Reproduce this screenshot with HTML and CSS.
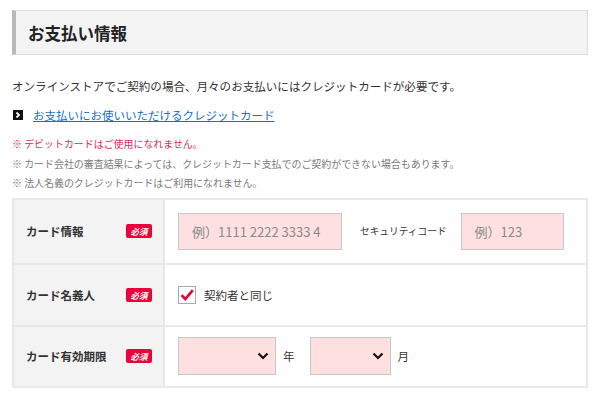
FILE: index.html
```html
<!DOCTYPE html>
<html lang="ja">
<head>
<meta charset="utf-8">
<link rel="stylesheet" href="styles.css">
</head>
<body>
<div class="page">
  <h2 class="heading">お支払い情報</h2>
  <p class="lead">オンラインストアでご契約の場合、月々のお支払いにはクレジットカードが必要です。</p>
  <p class="linkline"><span class="arrow"><svg width="10" height="10" viewBox="0 0 10 10"><path d="M3.5 2.5 L6 5 L3.5 7.5" fill="none" stroke="#fff" stroke-width="1.8"/></svg></span><a href="#" class="link">お支払いにお使いいただけるクレジットカード</a></p>
  <ul class="notes">
    <li class="note red">※ デビットカードはご使用になれません。</li>
    <li class="note">※ カード会社の審査結果によっては、クレジットカード支払でのご契約ができない場合もあります。</li>
    <li class="note">※ 法人名義のクレジットカードはご利用になれません。</li>
  </ul>
  <div class="form">
    <div class="row row1">
      <div class="label"><span class="ltext">カード情報</span><span class="badge">必須</span></div>
      <div class="field">
        <div class="input card"><span class="ph">例）1111 2222 3333 4</span></div>
        <span class="sec">セキュリティコード</span>
        <div class="input code"><span class="ph">例）123</span></div>
      </div>
    </div>
    <div class="row row2">
      <div class="label"><span class="ltext">カード名義人</span><span class="badge">必須</span></div>
      <div class="field">
        <span class="check"><svg width="16" height="16" viewBox="0 0 16 16"><path d="M2.5 8.2 L6.3 12 L13.8 3.2" fill="none" stroke="#e60033" stroke-width="2.6"/></svg></span>
        <span class="ctext">契約者と同じ</span>
      </div>
    </div>
    <div class="row row3">
      <div class="label"><span class="ltext">カード有効期限</span><span class="badge">必須</span></div>
      <div class="field">
        <div class="select year"><svg width="12" height="8" viewBox="0 0 12 8"><path d="M1.5 1.5 L6 6 L10.5 1.5" fill="none" stroke="#111" stroke-width="2.2"/></svg></div>
        <span class="unit">年</span>
        <div class="select month"><svg width="12" height="8" viewBox="0 0 12 8"><path d="M1.5 1.5 L6 6 L10.5 1.5" fill="none" stroke="#111" stroke-width="2.2"/></svg></div>
        <span class="unit">月</span>
      </div>
    </div>
  </div>
</div>
</body>
</html>
```

FILE: styles.css
```css
* { box-sizing: border-box; }
html, body { margin: 0; padding: 0; background: #fff; }
body {
  font-family: "Noto Sans CJK JP", "Noto Sans", sans-serif;
  color: #333;
}
.page {
  padding: 10px 12px 0 12px;
  width: 600px;
}
.heading {
  margin: 0;
  height: 45px;
  display: flex;
  align-items: center;
  padding-left: 12px;
  background: #f3f3f3;
  border: 1px solid #dcdcdc;
  border-left: 4px solid #b9b9b9;
  font-size: 16.5px;
  font-weight: bold;
  color: #222;
}
.lead {
  margin: 22px 0 0 0;
  font-size: 11.55px;
  line-height: 18px;
}
.linkline {
  margin: 11px 0 0 1px;
  display: flex;
  align-items: center;
  font-size: 11.5px;
  line-height: 18px;
}
.arrow {
  width: 10px;
  height: 10px;
  background: #111;
  display: inline-flex;
  margin-right: 10px;
}
.link {
  color: #1a6fc9;
  text-decoration: underline;
}
.notes {
  list-style: none;
  margin: 10px 0 0 0;
  padding: 0;
}
.note {
  font-size: 9.95px;
  line-height: 19.5px;
  color: #7a7a7a;
}
.note.red { color: #e22a5c; }
.form {
  margin-top: 5px;
  border: 2px solid #e8e8e8;
}
.row {
  display: flex;
  border-top: 2px solid #e8e8e8;
}
.row:first-child { border-top: none; }
.row1 { height: 63px; }
.row2 { height: 62px; }
.row3 { height: 61px; }
.label {
  width: 151px;
  flex: none;
  background: #f3f3f3;
  border-right: 2px solid #e8e8e8;
  display: flex;
  align-items: center;
  padding-left: 12px;
}
.ltext {
  font-size: 11.5px;
  font-weight: bold;
  color: #333;
  flex: 1;
}
.badge {
  background: #e8033a;
  color: #fff;
  font-size: 8.5px;
  font-weight: bold;
  width: 26px;
  height: 14px;
  border-radius: 2px;
  display: inline-flex;
  align-items: center;
  justify-content: center;
  margin-right: 11px;
  font-style: italic;
}
.field {
  flex: 1;
  display: flex;
  align-items: center;
  padding-left: 13px;
}
.input {
  height: 37px;
  background: #fde0df;
  border: 1px solid #c8c8c8;
  display: flex;
  align-items: center;
  white-space: nowrap;
  padding: 0 0 0 13px;
}
.ph {
  display: block;
  font-size: 13px;
  color: #8a8a8a;
}
.card { width: 164px; }
.code { width: 103px; }
.sec {
  font-size: 9.7px;
  color: #333;
  margin: 0 14px 0 18px;
}
.check {
  width: 18px;
  height: 18px;
  border: 1px solid #aaa;
  background: #fff;
  display: inline-flex;
  align-items: center;
  justify-content: center;
  margin-right: 8px;
}
.ctext { font-size: 11.5px; color: #333; }
.select {
  height: 38px;
  background: #fde0df;
  border: 1px solid #c8c8c8;
  display: flex;
  align-items: center;
  justify-content: flex-end;
  padding-right: 6px;
}
.year { width: 98px; }
.month { width: 81px; }
.unit {
  font-size: 11.5px;
  color: #333;
  margin: 0 15px 0 7px;
}
```
